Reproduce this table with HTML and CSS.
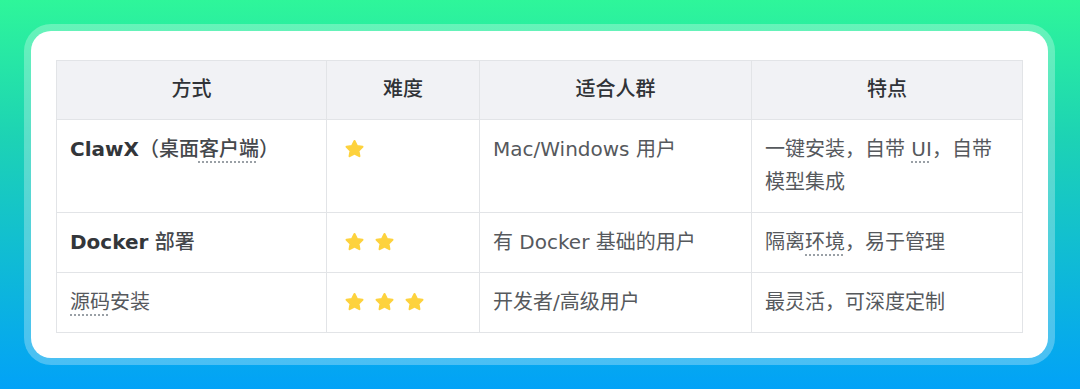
FILE: index.html
```html
<!DOCTYPE html>
<html lang="zh-CN">
<head>
<meta charset="utf-8">
<link rel="stylesheet" href="styles.css">
</head>
<body>
<div class="frame">
  <div class="card">
    <table class="cmp">
      <colgroup>
        <col class="c1"><col class="c2"><col class="c3"><col class="c4">
      </colgroup>
      <thead>
        <tr><th>方式</th><th>难度</th><th>适合人群</th><th>特点</th></tr>
      </thead>
      <tbody>
        <tr>
          <td class="name"><b>ClawX</b><span class="cjk">（桌面<span class="dot">客户端</span>）</span></td>
          <td><span class="stars"><svg class="star" viewBox="0 0 24 24"><path d="M12 3.2l2.7 5.5 6 .9-4.35 4.25 1.03 6L12 17l-5.38 2.85 1.03-6L3.3 9.6l6-.9z"/></svg></span></td>
          <td>Mac/Windows 用户</td>
          <td>一键安装，自带 <span class="dot">UI</span>，自带模型集成</td>
        </tr>
        <tr>
          <td class="name"><b>Docker</b> <span class="cjk">部署</span></td>
          <td><span class="stars"><svg class="star" viewBox="0 0 24 24"><path d="M12 3.2l2.7 5.5 6 .9-4.35 4.25 1.03 6L12 17l-5.38 2.85 1.03-6L3.3 9.6l6-.9z"/></svg><svg class="star" viewBox="0 0 24 24"><path d="M12 3.2l2.7 5.5 6 .9-4.35 4.25 1.03 6L12 17l-5.38 2.85 1.03-6L3.3 9.6l6-.9z"/></svg></span></td>
          <td>有 Docker 基础的用户</td>
          <td>隔离<span class="dot">环境</span>，易于管理</td>
        </tr>
        <tr>
          <td><span class="dot">源码</span>安装</td>
          <td><span class="stars"><svg class="star" viewBox="0 0 24 24"><path d="M12 3.2l2.7 5.5 6 .9-4.35 4.25 1.03 6L12 17l-5.38 2.85 1.03-6L3.3 9.6l6-.9z"/></svg><svg class="star" viewBox="0 0 24 24"><path d="M12 3.2l2.7 5.5 6 .9-4.35 4.25 1.03 6L12 17l-5.38 2.85 1.03-6L3.3 9.6l6-.9z"/></svg><svg class="star" viewBox="0 0 24 24"><path d="M12 3.2l2.7 5.5 6 .9-4.35 4.25 1.03 6L12 17l-5.38 2.85 1.03-6L3.3 9.6l6-.9z"/></svg></span></td>
          <td>开发者/高级用户</td>
          <td>最灵活，可深度定制</td>
        </tr>
      </tbody>
    </table>
  </div>
</div>
</body>
</html>
```

FILE: styles.css
```css
html, body {
  margin: 0;
  height: 100%;
}
body {
  box-sizing: border-box;
  padding: 24px 25px 24px 24px;
  background: linear-gradient(180deg, #2ef69a 0%, #1dd3b4 35%, #02a2f7 100%);
  font-family: "DejaVu Sans", "Noto Sans CJK SC", sans-serif;
}
.frame {
  height: 100%;
  box-sizing: border-box;
  padding: 7px;
  border-radius: 27px;
  background: rgba(255, 255, 255, 0.28);
}
.card {
  height: 100%;
  box-sizing: border-box;
  background: #ffffff;
  border-radius: 20px;
  padding: 29px 26px 27px 25px;
}
.cmp {
  width: 966px;
  border-collapse: collapse;
  table-layout: fixed;
  font-size: 20px;
  line-height: 33px;
  color: #56595d;
}
.c1 { width: 270px; }
.c2 { width: 153px; }
.c3 { width: 272px; }
.c4 { width: 271px; }
.cmp th,
.cmp td {
  border: 1px solid #e2e4e7;
  padding: 13px 13px 13px;
  vertical-align: top;
  text-align: left;
}
.cmp th {
  padding: 12px 13px 13px;
  background: #f1f2f5;
  text-align: center;
  font-weight: 500;
  color: #303337;
}
.cmp td.name {
  color: #33363a;
}
.cmp td.name b {
  font-weight: bold;
}
.cjk {
  font-weight: 500;
  color: #45484c;
}
.dot {
  text-decoration: underline dotted #9aa0a6;
  text-underline-offset: 5px;
}
.stars {
  display: inline-flex;
  gap: 7px;
  vertical-align: top;
  padding: 5px 0 0 3px;
}
.star {
  width: 23px;
  height: 22px;
  display: block;
}
.star path {
  fill: #fdd23d;
  stroke: #fdd23d;
  stroke-width: 2.2;
  stroke-linejoin: round;
}
```
